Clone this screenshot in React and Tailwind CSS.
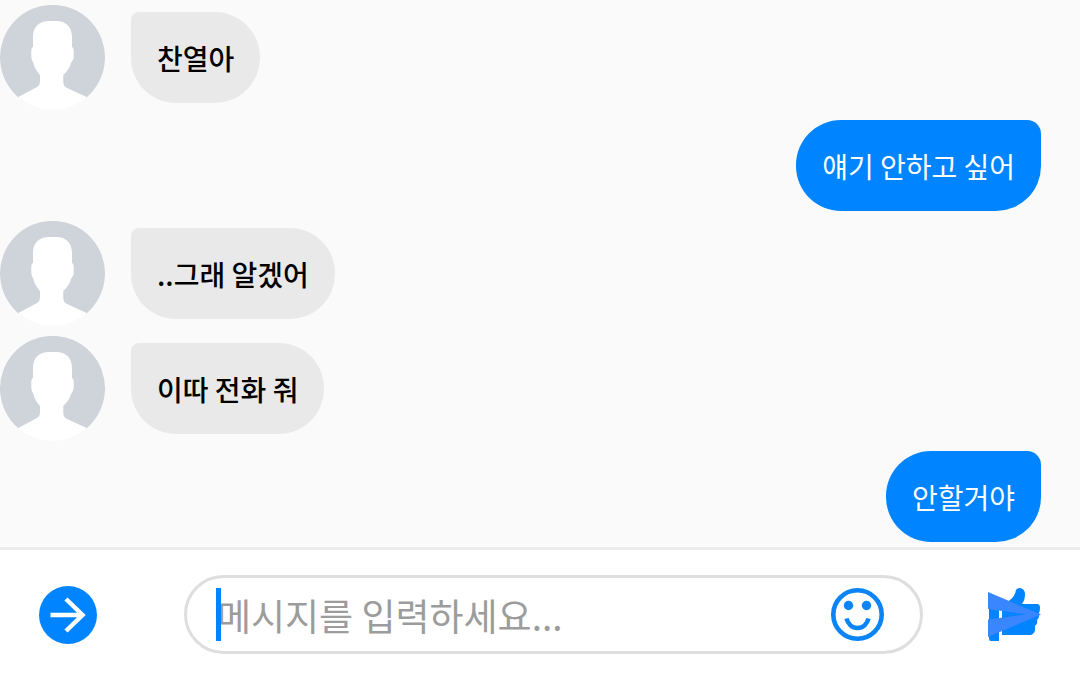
import React from 'react';

const MESSAGES = [
  { id: 1, from: 'friend', text: '찬열아' },
  { id: 2, from: 'me', text: '얘기 안하고 싶어' },
  { id: 3, from: 'friend', text: '..그래 알겠어' },
  { id: 4, from: 'friend', text: '이따 전화 줘' },
  { id: 5, from: 'me', text: '안할거야' },
];

const Avatar = () => (
  <svg viewBox="0 0 105 105" className="size-[105px] shrink-0" aria-hidden="true">
    <path fill="#cfd4db" d="M18.300 92.200A52.500 52.500 0 1 1 86.700 92.200Z" />
    <path
      fill="#fff"
      d="M49 16H56C66 16 72 22 72 32V42Q74 43 73.700 48V52Q73 56 71.500 57Q69 65 63.300 70V77Q63.300 81 67 83L86.700 92A52.500 52.500 0 0 1 18.300 92L37 82Q40 80 40 77V70Q35 65 33 57Q31.500 55 31.300 52V48Q31 43 33 42V32C33 22 39 16 49 16Z"
    />
  </svg>
);

const ArrowIcon = () => (
  <svg viewBox="0 0 58 58" className="size-[58px]" fill="none" aria-hidden="true">
    <circle cx="29" cy="29" r="29" fill="#0084ff" />
    <path d="M11.500 29H44M27 13L43.500 29L27 45" stroke="#fff" strokeWidth="4.500" />
  </svg>
);

const SmileIcon = () => (
  <svg viewBox="0 0 53 53" className="size-[53px]" fill="none" aria-hidden="true">
    <circle cx="26.500" cy="26.500" r="24.200" stroke="#0a84f6" strokeWidth="4.600" />
    <circle cx="17.500" cy="17.500" r="4.700" fill="#0a84f6" />
    <circle cx="35.500" cy="17.500" r="4.700" fill="#0a84f6" />
    <path d="M15.500 30.500C17 36 21 40 26.500 40S36 36 37.500 30.500" stroke="#0a84f6" strokeWidth="4.600" />
  </svg>
);

const SendIcon = () => (
  <svg viewBox="0 0 53 53" className="size-[53px]" aria-hidden="true">
    <path fill="#0084ff" d="M1 19H11V53H3Q1 53 1 51Z" />
    <path
      fill="#0084ff"
      d="M14 18L22 12Q27 8 28 2Q29 0 32 0Q37 1 37 6Q37 12 34 16H49Q52 16 52 20Q52 23 51 25Q52 29 49 32Q50 36 47 38Q48 45 43 47H14Z"
    />
    <path fill="#3a86ff" d="M0 4L53 26.500L0 49V31.500L38 26.500L0 21Z" />
  </svg>
);

const Message = ({ message }) => {
  if (message.from === 'me') {
    return (
      <li className="flex justify-end pr-[39px]">
        <p className="rounded-[45px] rounded-tr-[14px] bg-[#0084ff] px-[26px] pt-[25px] pb-[23px] text-[28px] leading-[43px] text-white">
          {message.text}
        </p>
      </li>
    );
  }
  return (
    <li className="flex items-center gap-[26px]">
      <Avatar />
      <p className="rounded-[45px] rounded-tl-[8px] bg-[#e9e9e9] px-[26px] pt-[25px] pb-[23px] text-[28px] leading-[43px] font-medium text-black">
        {message.text}
      </p>
    </li>
  );
};

const App = () => {
  return (
    <div className="flex min-h-screen flex-col bg-[#fafafa] font-['Noto_Sans_CJK_KR',sans-serif]">
      <ul className="flex flex-1 flex-col gap-[10px] py-[5px]">
        {MESSAGES.map((m) => (
          <Message key={m.id} message={m} />
        ))}
      </ul>

      {/* Composer */}
      <form
        onSubmit={(e) => e.preventDefault()}
        className="flex items-center border-t-3 border-[#ececec] bg-white px-[39px] pt-[25px] pb-5"
      >
        <button type="button" aria-label="더보기" className="mr-[87px] shrink-0">
          <ArrowIcon />
        </button>
        <div className="relative flex h-[79px] min-w-0 flex-1 items-center rounded-full border-3 border-[#dedede] pr-9 pl-[30px]">
          <input
            type="text"
            aria-label="메시지"
            placeholder="메시지를 입력하세요..."
            className="h-14 min-w-0 flex-1 bg-transparent text-[37px] text-black caret-[#0084ff] outline-none placeholder:text-[#9c9c9c]"
          />
          <span className="absolute left-[29px] h-[53px] w-[5px] bg-[#0084ff]" />
          <button type="button" aria-label="이모티콘" className="shrink-0">
            <SmileIcon />
          </button>
        </div>
        <button type="submit" aria-label="보내기" className="ml-[65px] shrink-0">
          <SendIcon />
        </button>
      </form>
    </div>
  );
};

export default App;
